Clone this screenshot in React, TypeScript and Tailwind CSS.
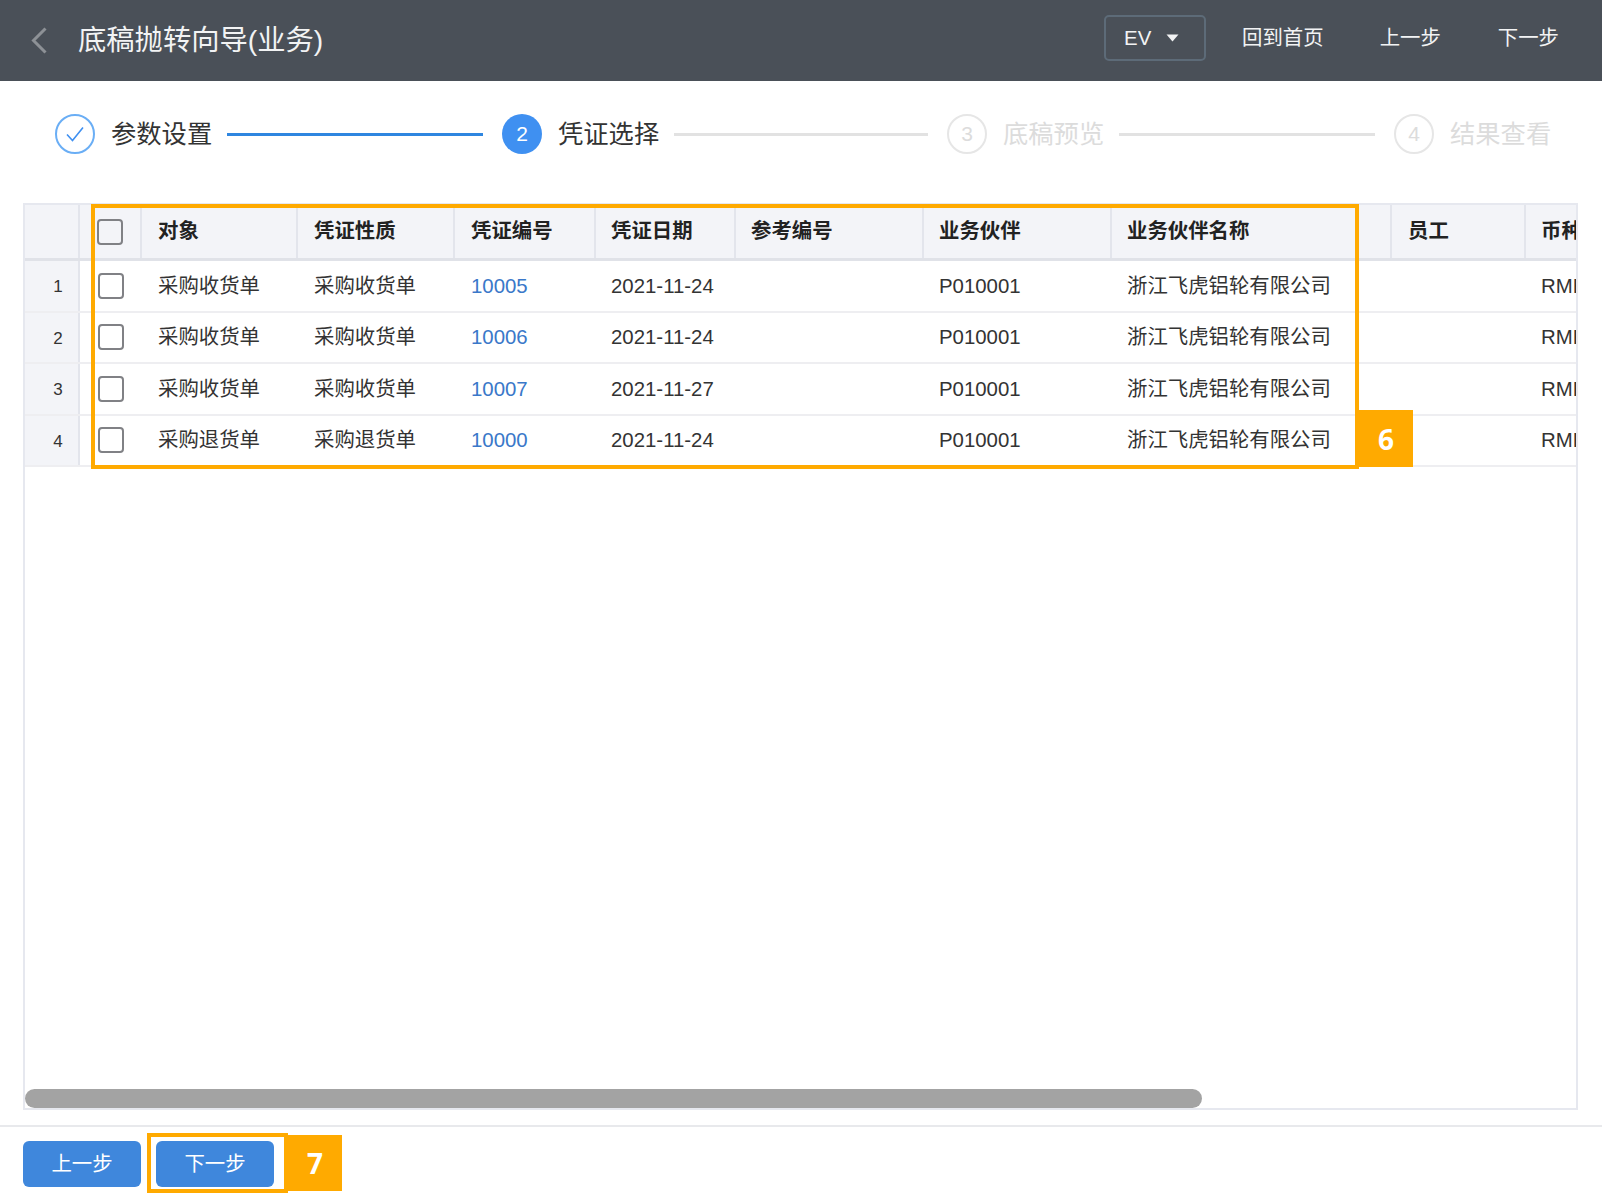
import React from "react";

const rows = [
  ["1", "采购收货单", "10005", "2021-11-24"],
  ["2", "采购收货单", "10006", "2021-11-24"],
  ["3", "采购收货单", "10007", "2021-11-27"],
  ["4", "采购退货单", "10000", "2021-11-24"],
];

const headCols: [string, string][] = [
  ["对象", "w-[156px] pl-4"],
  ["凭证性质", "w-[157px] pl-4"],
  ["凭证编号", "w-[141px] pl-4"],
  ["凭证日期", "w-[140px] pl-[15px]"],
  ["参考编号", "w-[188px] pl-[15px]"],
  ["业务伙伴", "w-[188px] pl-[15px]"],
  ["业务伙伴名称", "w-[280px] pl-[15px]"],
  ["员工", "w-[134px] pl-4"],
  ["币种", "w-[100px] pl-[15px]"],
];

function Checkbox({ className }: { className: string }) {
  return <div className={"w-[26px] h-[26px] shrink-0 rounded-[4px] border-2 border-[#808185] " + className} />;
}

function Step({ n, label, state }: { n: string; label: string; state: "done" | "active" | "todo" }) {
  return (
    <div className="flex items-center gap-4 shrink-0">
      {state === "done" && (
        <div className="w-10 h-10 rounded-full border-2 border-[#6aaef5] flex items-center justify-center">
          <svg width="20" height="16" viewBox="0 0 20 16" fill="none">
            <path d="M2 8.5 L7.5 14.5 L18 1.5" stroke="#3f90f1" strokeWidth="1.6" />
          </svg>
        </div>
      )}
      {state === "active" && (
        <div className="w-10 h-10 rounded-full bg-[#3f90f1] text-white text-[21px] flex items-center justify-center">{n}</div>
      )}
      {state === "todo" && (
        <div className="w-10 h-10 rounded-full border-2 border-[#e6e6e6] text-[#dcdcdc] text-[21px] flex items-center justify-center">{n}</div>
      )}
      <span className={"text-[25.3px] w-[100px] whitespace-nowrap leading-10 " + (state === "todo" ? "text-[#dcdcdc]" : "text-[#333333]")}>{label}</span>
    </div>
  );
}

function StepLine({ on, width }: { on?: boolean; width: string }) {
  return <div className={"ml-4 mr-[19px] h-[3px] shrink-0 " + width + " " + (on ? "bg-[#2f86e0]" : "bg-[#e2e2e2]")} />;
}

export default function App() {
  return (
    <div className="relative w-[1602px] h-[1200px] overflow-hidden bg-white flex flex-col font-['Liberation_Sans','Noto_Sans_CJK_SC',sans-serif] text-[#333333]">
      <header className="h-[81px] shrink-0 bg-[#4a5058] flex items-center pl-[31px] pr-[43px] text-[#f2f3f4]">
        <svg width="16" height="27" viewBox="0 0 16 27" fill="none" className="shrink-0">
          <path d="M14.5 1.5 L2.5 13.5 L14.5 25.5" stroke="#8d9196" strokeWidth="3" />
        </svg>
        <h1 className="ml-[31px] text-[28.3px] font-normal whitespace-nowrap">底稿抛转向导(业务)</h1>
        <div className="ml-auto flex items-center pb-[5px] text-[20.4px]">
          <div className="w-[102px] h-[46px] border-2 border-[#5d6b78] rounded-[5px] flex items-center pl-[18px]">
            EV
            <svg width="13" height="8" viewBox="0 0 13 8" className="ml-[15px]">
              <path d="M0.5 0.5 H12.5 L6.5 7.5 Z" fill="#f2f3f4" />
            </svg>
          </div>
          <span className="ml-[36px] whitespace-nowrap">回到首页</span>
          <span className="ml-[56px] whitespace-nowrap">上一步</span>
          <span className="ml-[57px] whitespace-nowrap">下一步</span>
        </div>
      </header>

      <div className="flex items-center pl-[55px] pt-[33px] h-[73px] shrink-0">
        <Step n="1" label="参数设置" state="done" />
        <StepLine on width="w-[256px]" />
        <Step n="2" label="凭证选择" state="active" />
        <StepLine width="w-[254px]" />
        <Step n="3" label="底稿预览" state="todo" />
        <StepLine width="w-[256px]" />
        <Step n="4" label="结果查看" state="todo" />
      </div>

      <div className="relative mt-[49px] ml-[23px] mr-[24px] h-[907px] shrink-0 border-2 border-[#e6e8ef] overflow-hidden text-[20.4px]">
        <div className="flex h-[56px] w-[1700px] bg-[#f3f4f8] border-b-[3px] border-[#e0e2e8]">
          <div className="w-[55px] border-r-2 border-[#e3e5ec] shrink-0" />
          <div className="w-[62px] border-r-2 border-[#e3e5ec] shrink-0 flex items-center pl-[17px]">
            <Checkbox className="bg-[#f3f4f8]" />
          </div>
          {headCols.map(([t, w]) => (
            <div key={t} className={w + " shrink-0 border-r-2 border-[#e3e5ec] flex items-center font-bold text-[#222222] whitespace-nowrap"}>
              {t}
            </div>
          ))}
        </div>
        {rows.map(([idx, kind, no, date]) => (
          <div key={idx} className="flex h-[51.5px] w-[1700px] border-b-2 border-[#eeeef1]">
            <div className="w-[55px] shrink-0 bg-[#f3f4f8] border-r-2 border-[#e3e5ec] flex items-center justify-center pl-[13px] pt-[2px] text-[17px]">{idx}</div>
            <div className="w-[62px] shrink-0 flex items-center pl-[18px]">
              <Checkbox className="bg-white" />
            </div>
            <div className="w-[156px] shrink-0 flex items-center pl-4 pt-[1px]">{kind}</div>
            <div className="w-[157px] shrink-0 flex items-center pl-4 pt-[1px]">{kind}</div>
            <div className="w-[141px] shrink-0 flex items-center pl-4 pt-[1px] text-[#3a78c9]">{no}</div>
            <div className="w-[140px] shrink-0 flex items-center pl-[15px] pt-[1px]">{date}</div>
            <div className="w-[188px] shrink-0" />
            <div className="w-[188px] shrink-0 flex items-center pl-[15px] pt-[1px]">P010001</div>
            <div className="w-[280px] shrink-0 flex items-center pl-[15px] pt-[1px] whitespace-nowrap">浙江飞虎铝轮有限公司</div>
            <div className="w-[134px] shrink-0" />
            <div className="w-[100px] shrink-0 flex items-center pl-[15px] pt-[1px]">RMB</div>
          </div>
        ))}
        <div className="absolute left-0 bottom-0 w-[1177px] h-[19px] rounded-full bg-[#a3a3a3]" />
      </div>

      <footer className="mt-[15px] border-t-2 border-[#e8e9ec] pt-[14px] pl-[23px] flex gap-[15px]">
        <button className="w-[118px] h-[46px] rounded-[6px] bg-[#3f87dc] text-white text-[20.4px]">上一步</button>
        <button className="w-[118px] h-[46px] rounded-[6px] bg-[#3f87dc] text-white text-[20.4px]">下一步</button>
      </footer>

      <div className="absolute left-[91px] top-[204px] w-[1268px] h-[265px] border-4 border-[#ffaa00]" />
      <div className="absolute left-[1359px] top-[410px] w-[54px] h-[57px] bg-[#ffaa00] flex items-center justify-center text-white font-bold text-[28px] font-['Noto_Sans',sans-serif]">6</div>
      <div className="absolute left-[147px] top-[1133px] w-[141px] h-[60px] border-4 border-[#ffaa00]" />
      <div className="absolute left-[288px] top-[1135px] w-[54px] h-[56px] bg-[#ffaa00] flex items-center justify-center text-white font-bold text-[28px] font-['Noto_Sans',sans-serif]">7</div>
    </div>
  );
}
